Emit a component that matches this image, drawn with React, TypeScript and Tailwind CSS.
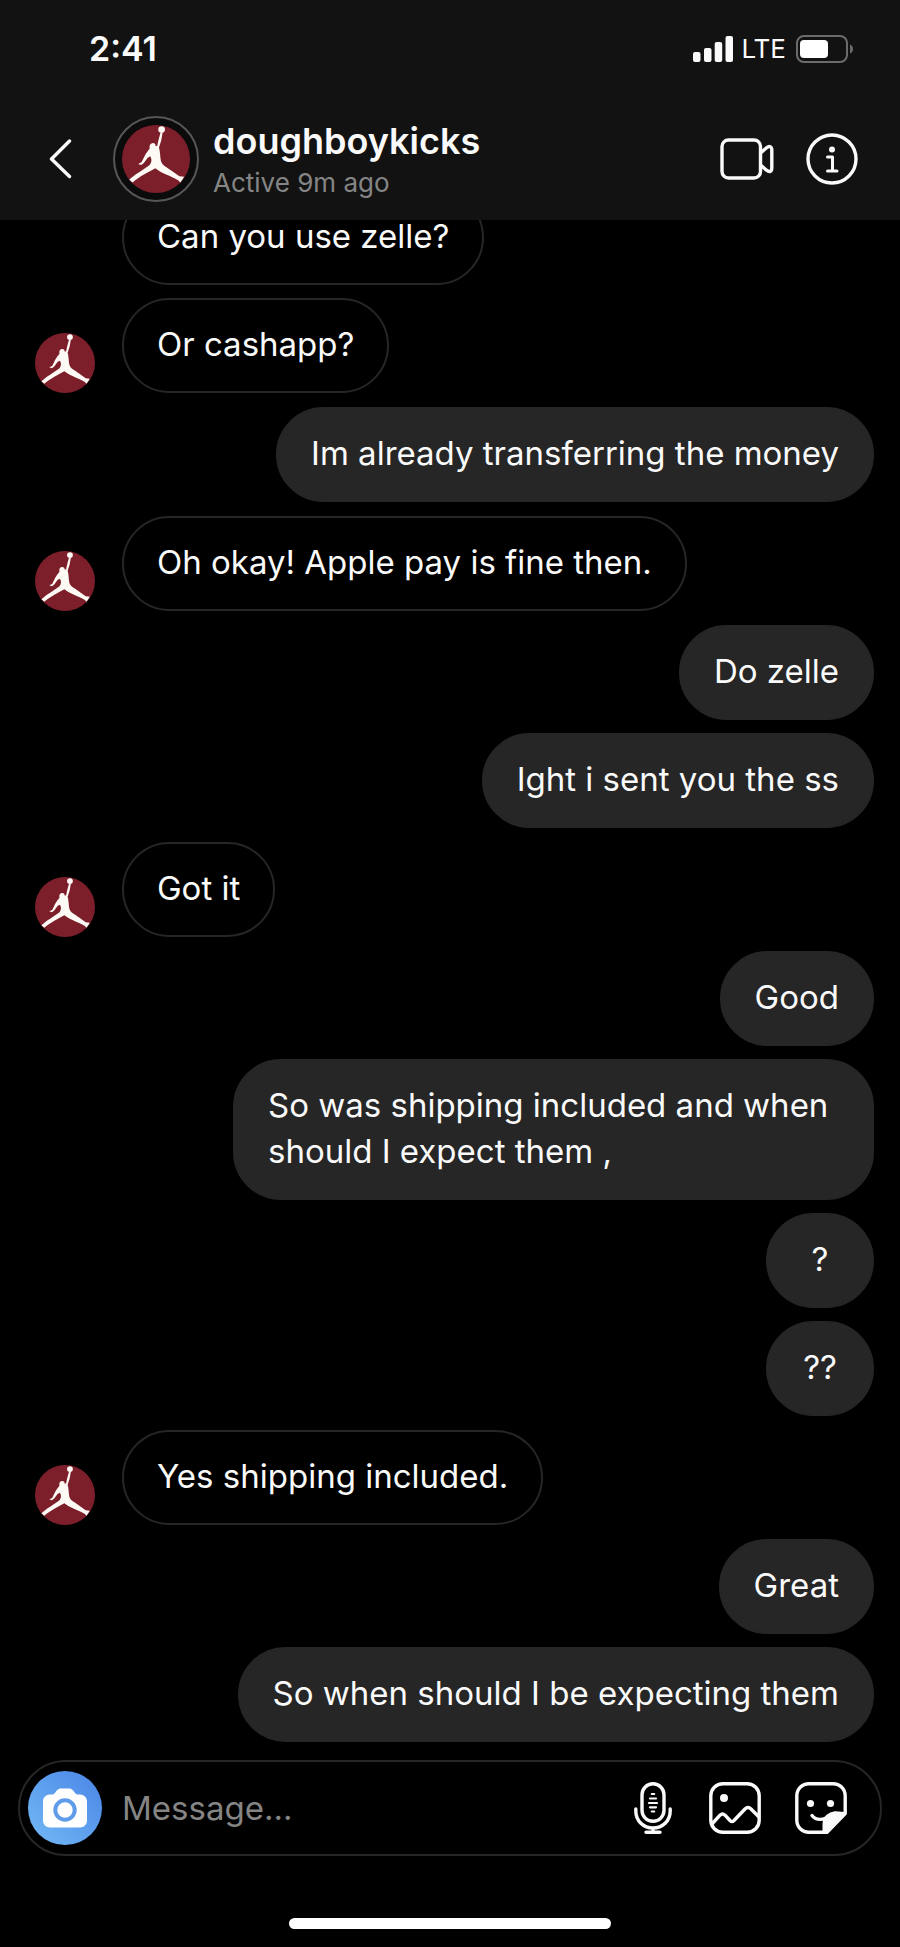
import React, { useState } from "react";
import clsx from "clsx";

type Message = {
  id: number;
  from: "me" | "them";
  text: string;
  showAvatar?: boolean;
};

const messages: Message[] = [
  { id: 1, from: "them", text: "Can you use zelle?" },
  { id: 2, from: "them", text: "Or cashapp?", showAvatar: true },
  { id: 3, from: "me", text: "Im already transferring the money" },
  { id: 4, from: "them", text: "Oh okay! Apple pay is fine then.", showAvatar: true },
  { id: 5, from: "me", text: "Do zelle" },
  { id: 6, from: "me", text: "Ight i sent you the ss" },
  { id: 7, from: "them", text: "Got it", showAvatar: true },
  { id: 8, from: "me", text: "Good" },
  { id: 9, from: "me", text: "So was shipping included and when should I expect them ," },
  { id: 10, from: "me", text: "?" },
  { id: 11, from: "me", text: "??" },
  { id: 12, from: "them", text: "Yes shipping included.", showAvatar: true },
  { id: 13, from: "me", text: "Great" },
  { id: 14, from: "me", text: "So when should I be expecting them" },
];

function Avatar({ className }: { className?: string }) {
  return (
    <svg viewBox="0 0 206 206" className={clsx("shrink-0", className)} aria-hidden="true">
      <circle cx="103" cy="103" r="103" fill="#7d1f2b" />
      <g fill="#fdf9f5">
        <circle cx="120" cy="14" r="10" />
        <path d="M117 22L123 23L119 46L112 68C116 80 115 95 118 109C121 120 128 124 138 130L174 155L188 157L185 162L177 174L170 167C150 155 122 148 101 131C85 140 52 156 32 174L22 166C30 158 40 150 52 143L82 123C87 118 90 112 89 104L86 95L78 99L66 115L58 121L49 118L59 113L69 93C75 82 80 76 84 71C82 62 85 56 92 55C98 54 102 58 102 64L107 63C109 50 113 36 117 22Z" />
      </g>
    </svg>
  );
}

function StatusBar() {
  return (
    <div className="flex h-[98px] items-center justify-between pl-[89px] pr-[46px]">
      <span className="text-[34px] font-semibold leading-10">2:41</span>
      <div className="flex items-center">
        <svg viewBox="0 0 40 26" className="h-[26px] w-10" fill="currentColor" aria-hidden="true">
          <rect x="0" y="16" width="7.5" height="10" rx="2" />
          <rect x="11" y="12" width="7.5" height="14" rx="2" />
          <rect x="21.7" y="6" width="7.5" height="20" rx="2" />
          <rect x="32.5" y="0" width="7.5" height="26" rx="2" />
        </svg>
        <span className="ml-2 text-[26px] leading-10">LTE</span>
        <svg viewBox="0 0 58 28" className="ml-2.5 h-7 w-[58px]" aria-hidden="true">
          <rect x="1" y="1" width="50" height="26" rx="7" fill="none" stroke="#6b6b6b" strokeWidth="2" />
          <rect x="4" y="5" width="28" height="18" rx="4" fill="#fff" />
          <path d="M54 9.5C58 11 58 17 54 18.5Z" fill="#6b6b6b" />
        </svg>
      </div>
    </div>
  );
}

function ChatHeader() {
  return (
    <header className="z-10 shrink-0 bg-[#121212]">
      <StatusBar />
      <div className="flex h-[122px] items-center pl-12 pr-[42px]">
        <button aria-label="Back">
          <svg viewBox="0 0 24 40" className="h-10 w-6" fill="none" stroke="currentColor" strokeWidth="3.4" strokeLinecap="round" strokeLinejoin="round">
            <path d="M21.5 2L3.5 20L21.5 37.5" />
          </svg>
        </button>
        <div className="ml-[41px] flex size-[86px] items-center justify-center rounded-full border-2 border-[#565656] bg-[#0b0b0b]">
          <Avatar className="size-[68px]" />
        </div>
        <div className="ml-3.5 min-w-0 flex-1">
          <h1 className="truncate text-[36px] font-semibold leading-[44px]">doughboykicks</h1>
          <p className="mt-1 text-[26px] leading-8 text-[#858585]">Active 9m ago</p>
        </div>
        <div className="flex items-center gap-8">
          <button aria-label="Video call">
            <svg viewBox="0 0 54 44" className="h-11 w-[54px]" fill="none" stroke="currentColor" strokeWidth="3.4" strokeLinejoin="round">
              <rect x="2" y="3" width="38.5" height="38" rx="6.5" />
              <path d="M40.5 16L46.5 10.8C49.5 8.5 51.8 9.5 51.8 13V31C51.8 34.8 49.5 35.5 46.5 33.2L40.5 28" />
            </svg>
          </button>
          <button aria-label="Conversation details">
            <svg viewBox="0 0 52 52" className="size-[52px]" fill="none" stroke="currentColor" strokeWidth="3.4">
              <circle cx="26" cy="26" r="24" />
              <circle cx="26" cy="16.5" r="3" fill="currentColor" stroke="none" />
              <path d="M21.5 24H26.5V38M21.5 38H31" strokeWidth="3" strokeLinecap="round" strokeLinejoin="round" />
            </svg>
          </button>
        </div>
      </div>
    </header>
  );
}

function MessageRow({ message, grouped }: { message: Message; grouped: boolean }) {
  const mine = message.from === "me";

  return (
    <li
      className={clsx(
        "flex shrink-0 items-end",
        grouped ? "mt-[13px]" : "mt-3.5",
        mine ? "justify-end" : "justify-start"
      )}
    >
      {!mine && (
        <div className="mr-[27px] w-[60px] shrink-0">
          {message.showAvatar && <Avatar className="size-[60px]" />}
        </div>
      )}
      <p
        className={clsx(
          "min-w-[108px] max-w-[641px] rounded-[48px] border-2 border-[#262626] px-[33px] pt-[21px] pb-6 text-[33px] leading-[46px]",
          mine && "bg-[#262626]",
          message.text.length < 3 && "text-center"
        )}
      >
        {message.text}
      </p>
    </li>
  );
}

function Composer() {
  const [text, setText] = useState("");

  return (
    <footer className="shrink-0 px-[18px] pt-[18px]">
      <form
        className="flex h-24 items-center rounded-full border-2 border-[#262626] pl-2 pr-[33px]"
        onSubmit={(e) => e.preventDefault()}
      >
        <button
          type="button"
          aria-label="Camera"
          className="flex size-[74px] shrink-0 items-center justify-center rounded-full bg-linear-to-tr from-[#74baf5] to-[#4a84e6]"
        >
          <svg viewBox="0 0 44 40" className="h-10 w-11" aria-hidden="true">
            <path d="M7 6.5H9.5C12 6.5 13.5 1 17 0.5H27C30.5 1 32 6.5 34.5 6.5H37C41 6.5 44 9.5 44 13.5V32.5C44 36.5 41 39.5 37 39.5H7C3 39.5 0 36.5 0 32.5V13.5C0 9.5 3 6.5 7 6.5Z" fill="#fff" />
            <circle cx="22" cy="22" r="9.7" fill="#fff" stroke="#5f9dea" strokeWidth="4" />
          </svg>
        </button>
        <input
          type="text"
          aria-label="Message"
          placeholder="Message..."
          value={text}
          onChange={(e) => setText(e.target.value)}
          className="ml-5 min-w-0 flex-1 bg-transparent text-[33px] leading-[46px] outline-none placeholder:text-[#858585]"
        />
        <div className="flex items-center gap-[34px]">
          <button type="button" aria-label="Record voice message">
            <svg viewBox="-3 0 44 52" className="h-[52px] w-11" fill="none" stroke="currentColor" strokeWidth="3.4" strokeLinecap="round">
              <rect x="8" y="1.8" width="22" height="37.5" rx="11" />
              <path d="M1.8 27V29C1.8 39 9.5 46 19 46S36.2 39 36.2 29V27M19 46V50M12 50.3H26" />
              <path d="M17.8 12H20.2M16 16.5H22M15 21H23M16 25.3H22M17.8 29.5H20.2" strokeWidth="2.2" />
            </svg>
          </button>
          <button type="button" aria-label="Choose photo">
            <svg viewBox="0 0 52 52" className="size-[52px]" fill="none" stroke="currentColor" strokeWidth="3.4" strokeLinejoin="round">
              <rect x="1.8" y="1.8" width="48.4" height="48.4" rx="12" />
              <circle cx="15" cy="16" r="4" fill="currentColor" stroke="none" />
              <path d="M3 42L11 33.2Q13.5 31 16 33.2L21 38.5Q23 40.5 25 38.5L36 27Q39 24 42 27L50 35" />
            </svg>
          </button>
          <button type="button" aria-label="Stickers">
            <svg viewBox="0 0 52 52" className="size-[52px]" fill="none" stroke="currentColor" strokeWidth="3.4" strokeLinecap="round" strokeLinejoin="round">
              <path d="M32 50.2H14C7 50.2 1.8 45 1.8 38V14C1.8 7 7 1.8 14 1.8H38C45 1.8 50.2 7 50.2 14V31.5Z" />
              <path d="M50 31L31.5 49.5H28.5V42C28.5 35 34 31 40 30.3Z" fill="currentColor" stroke="currentColor" strokeWidth="2" />
              <circle cx="15.5" cy="21.5" r="3.6" fill="currentColor" stroke="none" />
              <circle cx="35.5" cy="21.5" r="3.6" fill="currentColor" stroke="none" />
              <path d="M17 33.5C21 38.3 25.5 38.3 31 36" />
            </svg>
          </button>
        </div>
      </form>
      <div className="flex h-[91px] items-end justify-center pb-[18px]">
        <div className="h-[11px] w-[322px] rounded-full bg-white" />
      </div>
    </footer>
  );
}

export default function App() {
  return (
    <div className="flex h-screen flex-col bg-black font-['Inter',sans-serif] text-[#fafafa]">
      <ChatHeader />
      <main className="flex min-h-0 flex-1 flex-col justify-end overflow-hidden pl-[35px] pr-[26px]">
        <ul className="flex flex-col">
          {messages.map((message, i) => (
            <MessageRow
              key={message.id}
              message={message}
              grouped={i > 0 && messages[i - 1].from === message.from}
            />
          ))}
        </ul>
      </main>
      <Composer />
    </div>
  );
}
